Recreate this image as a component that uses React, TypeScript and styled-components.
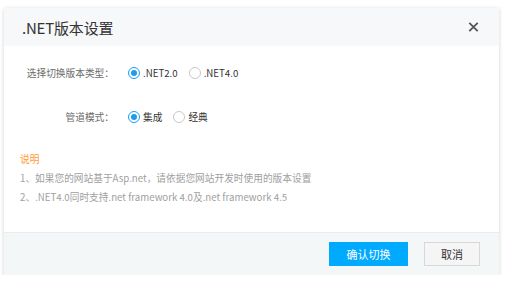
import { useState } from "react";
import styled, { createGlobalStyle } from "styled-components";

const GlobalStyle = createGlobalStyle`
  html, body {
    margin: 0;
    padding: 0;
    background: #ffffff;
  }
  body {
    font-family: "Noto Sans CJK SC", "Liberation Sans", sans-serif;
  }
`;

interface IOption {
  value: string;
  label: string;
}

const versionOptions: IOption[] = [
  { value: "2.0", label: ".NET2.0" },
  { value: "4.0", label: ".NET4.0" },
];

const pipelineOptions: IOption[] = [
  { value: "integrated", label: "集成" },
  { value: "classic", label: "经典" },
];

interface IRadioGroupProps {
  options: IOption[];
  value: string;
  onChange: (value: string) => void;
}

const RadioGroup = ({ options, value, onChange }: IRadioGroupProps) => {
  return (
    <Options>
      {options.map((option) => (
        <RadioLabel key={option.value} onClick={() => onChange(option.value)}>
          <RadioDot $checked={option.value === value} />
          <span>{option.label}</span>
        </RadioLabel>
      ))}
    </Options>
  );
};

const App = () => {
  const [version, setVersion] = useState("2.0");
  const [pipeline, setPipeline] = useState("integrated");

  return (
    <>
      <GlobalStyle />
      <Dialog>
        <Header>
          <Title>.NET版本设置</Title>
          <CloseButton aria-label="关闭">
            <svg width="11" height="10" viewBox="0 0 11 10">
              <path d="M1.3 0.8 L9.7 9.2 M9.7 0.8 L1.3 9.2" stroke="#555555" strokeWidth="1.8" />
            </svg>
          </CloseButton>
        </Header>
        <Body>
          <FormRow>
            <FieldLabel>选择切换版本类型：</FieldLabel>
            <RadioGroup options={versionOptions} value={version} onChange={setVersion} />
          </FormRow>
          <FormRow $spaced>
            <FieldLabel>管道模式：</FieldLabel>
            <RadioGroup options={pipelineOptions} value={pipeline} onChange={setPipeline} />
          </FormRow>
          <Notes>
            <NoteTitle>说明</NoteTitle>
            <NoteLine>1、如果您的网站基于Asp.net，请依据您网站开发时使用的版本设置</NoteLine>
            <NoteLine>2、.NET4.0同时支持.net framework 4.0及.net framework 4.5</NoteLine>
          </Notes>
        </Body>
        <Footer>
          <PrimaryButton>确认切换</PrimaryButton>
          <DefaultButton>取消</DefaultButton>
        </Footer>
      </Dialog>
    </>
  );
};

export default App;

const Dialog = styled.div`
  margin: 8px 0 0 4px;
  width: 495px;
  background: #ffffff;
  box-shadow: 0 1px 4px rgba(0, 0, 0, 0.18);
`;

const Header = styled.div`
  display: flex;
  align-items: center;
  justify-content: space-between;
  height: 38px;
  padding: 0 20px 0 18px;
  background: #f7f8fa;
`;

const Title = styled.div`
  font-size: 15px;
  color: #333333;
  letter-spacing: -0.2px;
`;

const CloseButton = styled.button`
  display: flex;
  align-items: center;
  justify-content: center;
  padding: 0;
  border: none;
  background: transparent;
  cursor: pointer;
`;

const Body = styled.div`
  padding: 17px 16px 25px 0;
`;

const FormRow = styled.div<{ $spaced?: boolean }>`
  display: flex;
  align-items: center;
  height: 20px;
  margin-top: ${(p) => (p.$spaced ? "24px" : "0")};
`;

const FieldLabel = styled.div`
  width: 110px;
  text-align: right;
  font-size: 9.7px;
  color: #6b6b6b;
`;

const Options = styled.div`
  display: flex;
  align-items: center;
  gap: 11px;
  margin-left: 14px;
`;

const RadioLabel = styled.label`
  display: flex;
  align-items: center;
  gap: 3px;
  font-size: 9.7px;
  color: #333333;
  cursor: pointer;
`;

const RadioDot = styled.span<{ $checked: boolean }>`
  position: relative;
  box-sizing: border-box;
  width: 12px;
  height: 12px;
  border-radius: 50%;
  border: 1px solid ${(p) => (p.$checked ? "#1a9cf0" : "#c8c8c8")};
  background: #ffffff;

  &::after {
    content: "";
    display: ${(p) => (p.$checked ? "block" : "none")};
    position: absolute;
    top: 2px;
    left: 2px;
    width: 6px;
    height: 6px;
    border-radius: 50%;
    background: #1a9cf0;
  }
`;

const Notes = styled.div`
  margin-top: 22px;
  padding-left: 16px;
`;

const NoteTitle = styled.div`
  font-size: 9.7px;
  line-height: 20px;
  color: #ff9a33;
`;

const NoteLine = styled.div`
  font-size: 9.7px;
  line-height: 19px;
  color: #a0a0a0;
`;

const Footer = styled.div`
  display: flex;
  justify-content: flex-end;
  align-items: center;
  gap: 16px;
  height: 42px;
  padding-right: 19px;
  border-top: 1px solid #e8ecee;
  background: #f4f7f8;
`;

const PrimaryButton = styled.button`
  width: 79px;
  height: 24px;
  border: none;
  background: #00aaff;
  color: #ffffff;
  font-family: inherit;
  font-size: 11px;
  cursor: pointer;
`;

const DefaultButton = styled.button`
  box-sizing: border-box;
  width: 56px;
  height: 24px;
  border: 1px solid #d8d8d8;
  background: #f5f5f5;
  color: #333333;
  font-family: inherit;
  font-size: 11px;
  cursor: pointer;
`;
